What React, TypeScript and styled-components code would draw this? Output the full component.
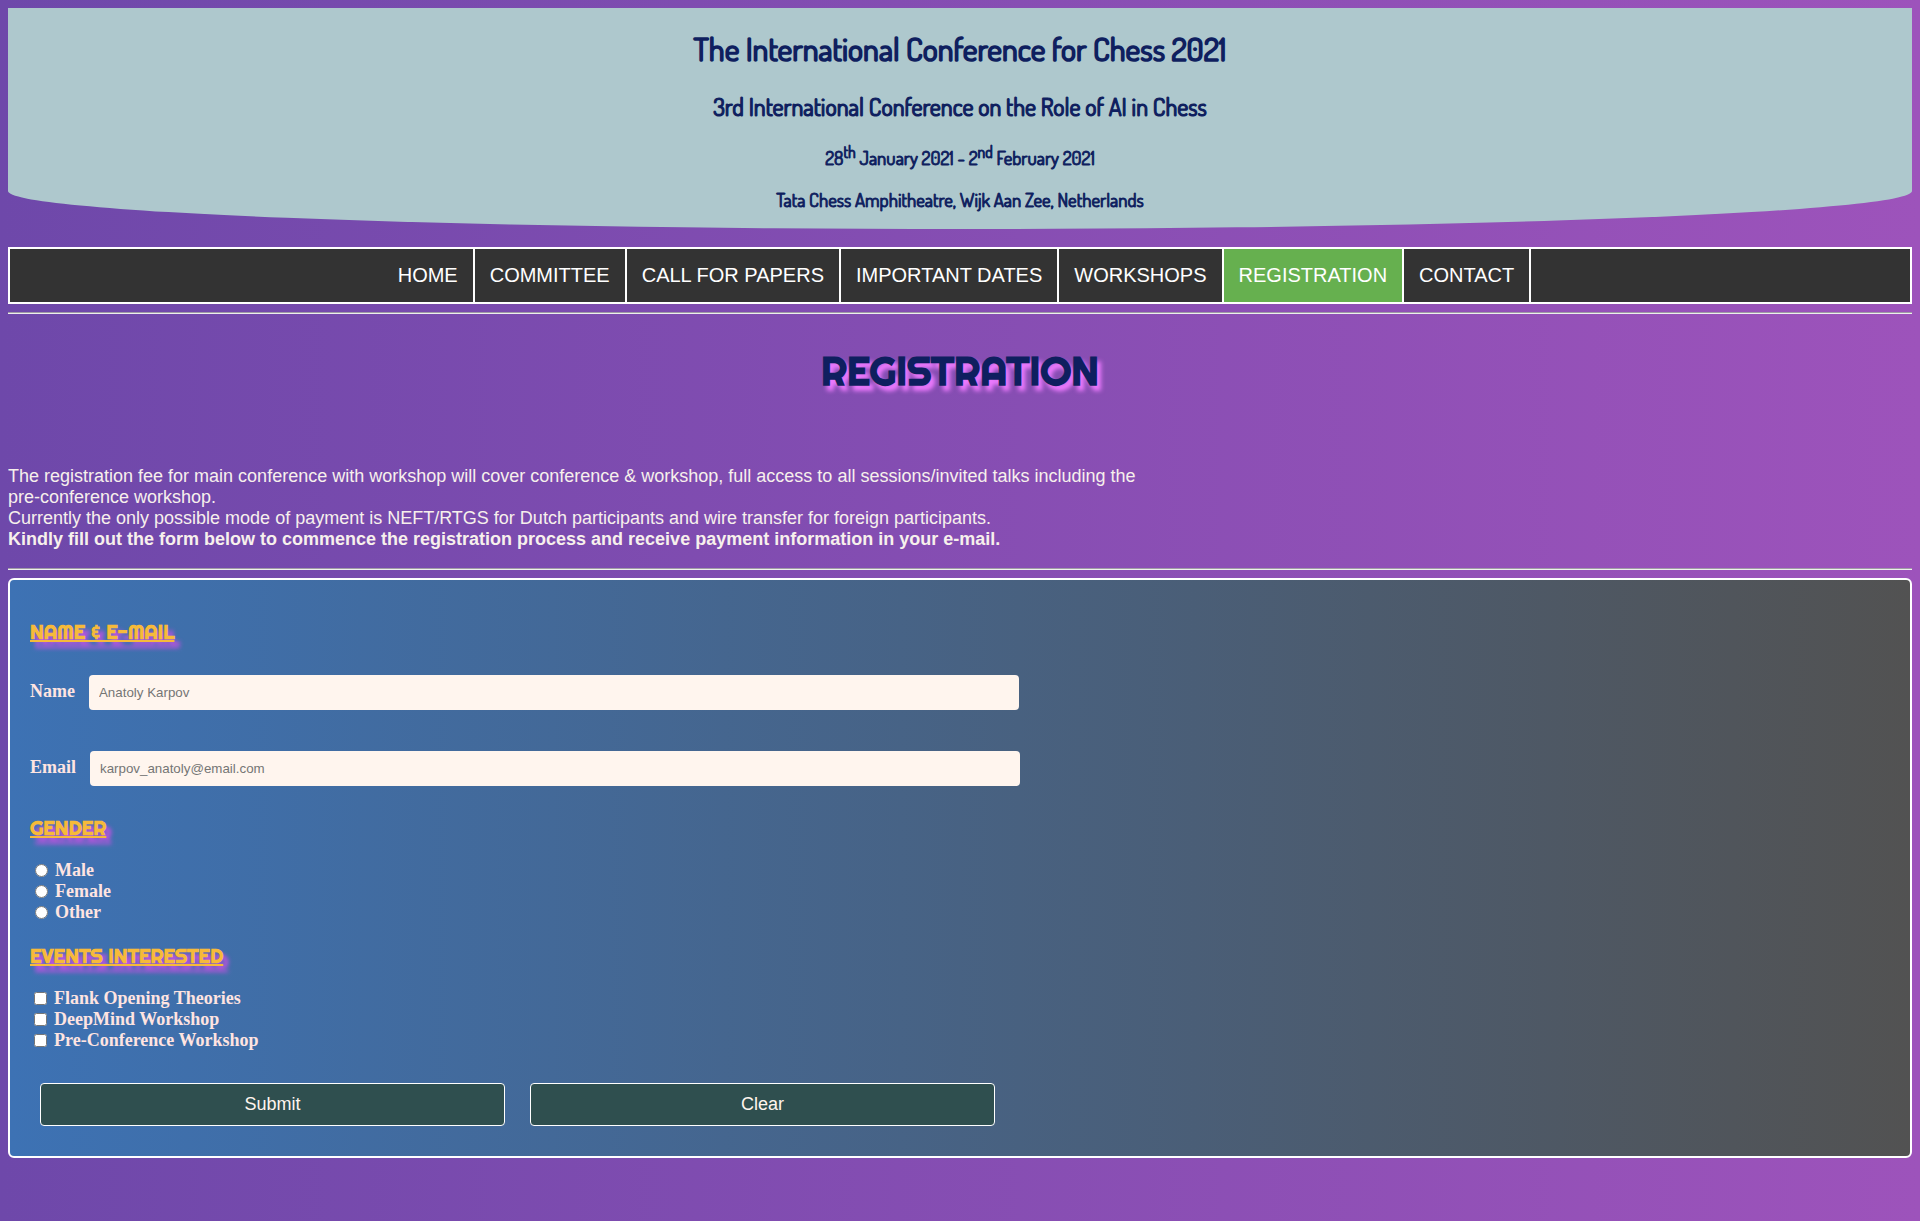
import React from "react";
import styled, { createGlobalStyle } from "styled-components";

const GlobalStyle = createGlobalStyle`
  html {
    min-height: 100%;
    background: linear-gradient(to right, #6e48aa, #9d53bb);
  }
  body {
    margin: 8px;
    font-family: "Liberation Serif", "Times New Roman", serif;
  }
  *, *::before, *::after {
    box-sizing: border-box;
  }
`;

const displayFont = `"Dosis", Lato, sans-serif`;
const headingFont = `"Righteous", Lato, sans-serif`;
const sansFont = `"Liberation Sans", Arial, sans-serif`;

const Header = styled.header`
  padding: 20px 16px 18px;
  border-radius: 0 0 50% 50% / 0 0 38px 38px;
  background: #aec8cd;
  color: #0f1f5f;
  font-family: ${displayFont};
  font-weight: 400;
  text-align: center;

  h1, h2, h3 {
    font-weight: inherit;
    -webkit-text-stroke: 0.05em #0f1f5f;
  }
`;

const Title = styled.h1`
  margin: 0 0 22px;
`;

const Subtitle = styled.h2`
  margin: 0 0 20px;
`;

const Detail = styled.h3`
  margin: 0;

  & + & {
    margin-top: 19px;
  }
`;

const Nav = styled.nav`
  margin: 18px 0 8px;
  border: 2px solid #fff;
  background: #333;
`;

const NavList = styled.ul`
  display: flex;
  justify-content: center;
  margin: 0;
  padding: 0 6px 0 0;
  list-style: none;
`;

const NavLink = styled.a<{ $active?: boolean }>`
  display: block;
  padding: 15px;
  border-right: 2px solid #fff;
  background: ${({ $active }) => ($active ? "#66b04f" : "transparent")};
  color: #fff;
  font: 20px/23px ${sansFont};
  text-decoration: none;
`;

const Divider = styled.hr`
  height: 2px;
  margin: 0;
  border: 0;
  border-top: 1px solid #a09ca6;
  border-bottom: 1px solid #eeeeee;
`;

const PageTitle = styled.h1`
  margin: 32px 0 71px;
  color: #0f1f5f;
  font-family: ${headingFont};
  font-size: 40px;
  line-height: 49px;
  font-weight: 700;
  text-align: center;
  text-shadow: 4px 5px 4px #ee7aff;
`;

const Intro = styled.p`
  width: 60%;
  margin: 0 0 18px;
  color: #f7f0ec;
  font: 18px/21px ${sansFont};
`;

const Form = styled.form`
  margin-top: 8px;
  padding: 38px 20px 30px;
  border: 2px solid #fff;
  border-radius: 6px;
  background: linear-gradient(to right, #3d72b4, #525252);
  color: #ffe4e1;
  font-size: 18px;
  line-height: 21px;
  font-weight: 700;
`;

const SectionTitle = styled.h2`
  width: fit-content;
  margin: 0 0 18px;
  color: #f6ba3a;
  font-family: ${headingFont};
  font-size: 20px;
  line-height: 28px;
  font-weight: 700;
  text-decoration: underline;
  text-decoration-thickness: 2px;
  text-shadow: 5px 6px 4px #d050e8;
`;

const Field = styled.div`
  display: flex;
  align-items: baseline;
  gap: 14px;
  margin: 29px 0 41px;

  & + & {
    margin-bottom: 28px;
  }
`;

const TextInput = styled.input`
  width: 50%;
  height: 35px;
  padding: 0 10px;
  border: 0;
  border-radius: 4px;
  background: #fff5ee;
  font-family: ${sansFont};

  &::placeholder {
    color: #757575;
  }
`;

const Options = styled.div`
  display: flex;
  flex-direction: column;
  margin-bottom: 19px;
`;

const Option = styled.label`
  display: flex;
  align-items: center;
  gap: 7px;
`;

const Radio = styled.input`
  width: 13px;
  height: 13px;
  margin: 0 0 0 5px;
`;

const Checkbox = styled(Radio)`
  margin-left: 4px;
`;

const Actions = styled.div`
  display: flex;
  gap: 15px;
  margin-top: 32px;
`;

const Button = styled.button`
  width: 25%;
  height: 43px;
  margin: 0 0 0 10px;
  border: 1px solid #fff;
  border-radius: 4px;
  background: #2f4f4f;
  color: #fff5ee;
  font: 18px ${sansFont};
`;

const pages = [
  "HOME",
  "COMMITTEE",
  "CALL FOR PAPERS",
  "IMPORTANT DATES",
  "WORKSHOPS",
  "REGISTRATION",
  "CONTACT",
];
const genders = ["Male", "Female", "Other"];
const events = ["Flank Opening Theories", "DeepMind Workshop", "Pre-Conference Workshop"];

export default function App() {
  return (
    <>
      <GlobalStyle />
      <Header>
        <Title>The International Conference for Chess 2021</Title>
        <Subtitle>3rd International Conference on the Role of AI in Chess</Subtitle>
        <Detail>
          28<sup>th</sup> January 2021 - 2<sup>nd</sup> February 2021
        </Detail>
        <Detail>Tata Chess Amphitheatre, Wijk Aan Zee, Netherlands</Detail>
      </Header>
      <Nav>
        <NavList>
          {pages.map((page) => (
            <li key={page}>
              <NavLink href="#" $active={page === "REGISTRATION"}>
                {page}
              </NavLink>
            </li>
          ))}
        </NavList>
      </Nav>
      <Divider />
      <main>
        <PageTitle>REGISTRATION</PageTitle>
        <Intro>
          The registration fee for main conference with workshop will cover conference &amp;
          workshop, full access to all sessions/invited talks including the pre-conference
          workshop.
          <br />
          Currently the only possible mode of payment is NEFT/RTGS for Dutch participants and
          wire transfer for foreign participants.
          <br />
          <strong>
            Kindly fill out the form below to commence the registration process and receive
            payment information in your e-mail.
          </strong>
        </Intro>
        <Divider />
        <Form onSubmit={(event) => event.preventDefault()}>
          <SectionTitle>NAME &amp; E-MAIL</SectionTitle>
          <Field>
            <label htmlFor="name">Name</label>
            <TextInput id="name" type="text" placeholder="Anatoly Karpov" />
          </Field>
          <Field>
            <label htmlFor="email">Email</label>
            <TextInput id="email" type="email" placeholder="karpov_anatoly@email.com" />
          </Field>
          <SectionTitle>GENDER</SectionTitle>
          <Options>
            {genders.map((gender) => (
              <Option key={gender}>
                <Radio type="radio" name="gender" value={gender} />
                {gender}
              </Option>
            ))}
          </Options>
          <SectionTitle>EVENTS INTERESTED</SectionTitle>
          <Options>
            {events.map((event) => (
              <Option key={event}>
                <Checkbox type="checkbox" name="events" value={event} />
                {event}
              </Option>
            ))}
          </Options>
          <Actions>
            <Button type="submit">Submit</Button>
            <Button type="reset">Clear</Button>
          </Actions>
        </Form>
      </main>
    </>
  );
}
